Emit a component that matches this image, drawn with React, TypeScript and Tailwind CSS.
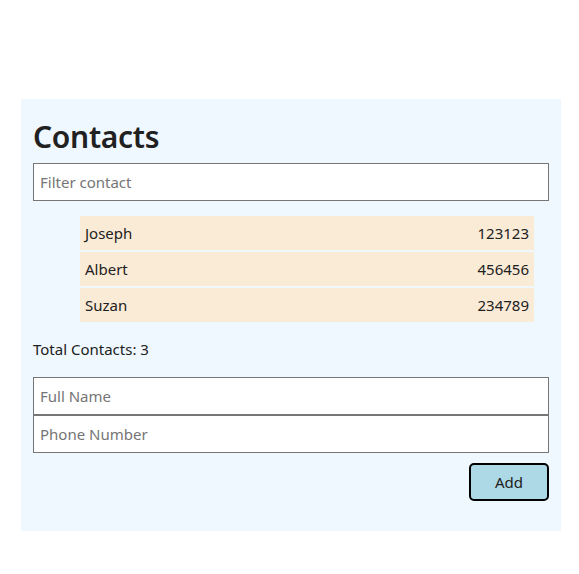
import React from "react";

const contacts = [
  { name: "Joseph", phone: "123123" },
  { name: "Albert", phone: "456456" },
  { name: "Suzan", phone: "234789" },
];

export default function App() {
  return (
    <div className="bg-white w-[579px] h-[574px] pt-[99px] pl-[21px]" style={{ fontFamily: '"Noto Sans", "Open Sans", sans-serif' }}>
      <div className="w-[540px] h-[432px] bg-[#f0f8ff] px-[12px] pt-[12px] text-[#212121]">
        <h1 className="text-[30px] font-semibold leading-[42px] h-[42px] mt-[5px] mb-[5px] tracking-[-0.3px]">Contacts</h1>
        <input
          className="block w-[516px] h-[38px] border border-[#767676] bg-white px-[6px] text-[15px] placeholder:text-[#757575] outline-none"
          placeholder="Filter contact"
        />
        <ul className="mt-[15px] ml-[47px] w-[454px] flex flex-col gap-[2px]">
          {contacts.map((c) => (
            <li key={c.name} className="h-[34px] bg-[#faebd7] px-[5px] flex items-center justify-between text-[15px]">
              <span>{c.name}</span>
              <span>{c.phone}</span>
            </li>
          ))}
        </ul>
        <p className="mt-[15px] h-[24px] leading-[24px] text-[15px]">Total Contacts: 3</p>
        <div className="mt-[16px]">
          <input
            className="block w-[516px] h-[38px] border border-[#767676] bg-white px-[6px] text-[15px] placeholder:text-[#757575] outline-none"
            placeholder="Full Name"
          />
          <input
            className="block w-[516px] h-[38px] border border-[#767676] bg-white px-[6px] text-[15px] placeholder:text-[#757575] outline-none"
            placeholder="Phone Number"
          />
        </div>
        <div className="flex justify-end mt-[10px]">
          <button className="w-[80px] h-[38px] bg-[#add8e6] border-2 border-black rounded-[5px] text-[15px] text-[#212121]">
            Add
          </button>
        </div>
      </div>
    </div>
  );
}
